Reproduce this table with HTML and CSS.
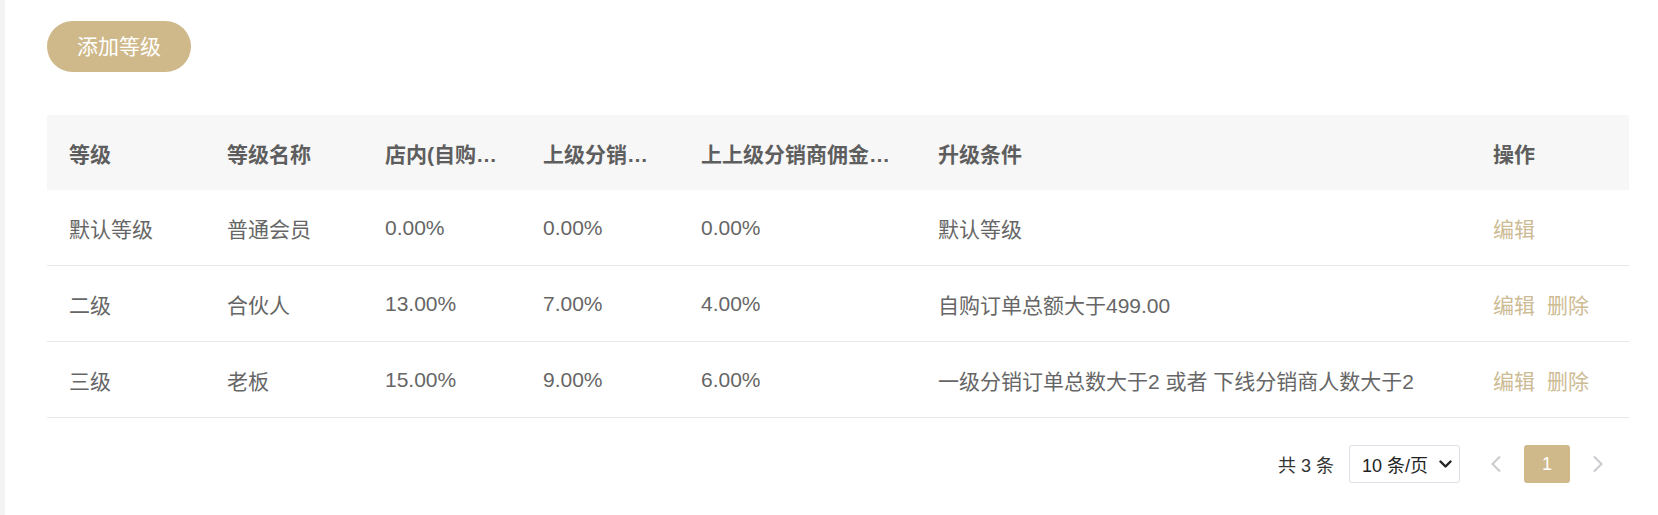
FILE: index.html
```html
<!DOCTYPE html>
<html lang="zh-CN">
<head>
<meta charset="utf-8">
<title>等级管理</title>
<link rel="stylesheet" href="styles.css">
</head>
<body>
<div class="page">
  <div class="toolbar">
    <button class="btn-add" type="button">添加等级</button>
  </div>
  <table class="grid">
    <colgroup>
      <col class="c-level">
      <col class="c-name">
      <col class="c-pct">
      <col class="c-pct">
      <col class="c-wide">
      <col class="c-cond">
      <col class="c-ops">
    </colgroup>
    <thead>
      <tr>
        <th>等级</th>
        <th>等级名称</th>
        <th title="店内(自购)佣金比例">店内(自购…</th>
        <th title="上级分销商佣金比例">上级分销…</th>
        <th title="上上级分销商佣金比例">上上级分销商佣金…</th>
        <th>升级条件</th>
        <th>操作</th>
      </tr>
    </thead>
    <tbody>
      <tr>
        <td>默认等级</td>
        <td>普通会员</td>
        <td>0.00%</td>
        <td>0.00%</td>
        <td>0.00%</td>
        <td>默认等级</td>
        <td><span class="op">编辑</span></td>
      </tr>
      <tr>
        <td>二级</td>
        <td>合伙人</td>
        <td>13.00%</td>
        <td>7.00%</td>
        <td>4.00%</td>
        <td>自购订单总额大于499.00</td>
        <td><span class="op">编辑</span><span class="op op-gap">删除</span></td>
      </tr>
      <tr>
        <td>三级</td>
        <td>老板</td>
        <td>15.00%</td>
        <td>9.00%</td>
        <td>6.00%</td>
        <td>一级分销订单总数大于2 或者 下线分销商人数大于2</td>
        <td><span class="op">编辑</span><span class="op op-gap">删除</span></td>
      </tr>
    </tbody>
  </table>
  <div class="pager">
    <span class="total">共 3 条</span>
    <div class="size-select">
      <span>10 条/页</span>
      <svg class="chev" width="13" height="8" viewBox="0 0 13 8"><path d="M1.5 1.5 L6.5 6.5 L11.5 1.5" fill="none" stroke="#222" stroke-width="2.4" stroke-linecap="round" stroke-linejoin="round"/></svg>
    </div>
    <span class="nav-btn prev">
      <svg width="12" height="18" viewBox="0 0 12 18"><path d="M10 1.5 L2.5 9 L10 16.5" fill="none" stroke="#c8cacf" stroke-width="2"/></svg>
    </span>
    <span class="page-num">1</span>
    <span class="nav-btn next">
      <svg width="12" height="18" viewBox="0 0 12 18"><path d="M2 1.5 L9.5 9 L2 16.5" fill="none" stroke="#c8cacf" stroke-width="2"/></svg>
    </span>
  </div>
</div>
</body>
</html>
```
FILE: styles.css
```css
html, body {
  margin: 0;
  padding: 0;
}
body {
  background: #f3f3f3;
  font-family: "Liberation Sans", "Noto Sans CJK SC", sans-serif;
}
.page {
  margin-left: 5px;
  min-height: 515px;
  background: #ffffff;
  padding: 21px 29px 0 42px;
  box-sizing: border-box;
}
.toolbar {
  height: 51px;
  margin-bottom: 43px;
}
.btn-add {
  height: 51px;
  padding: 0 30px;
  border: none;
  border-radius: 26px;
  background: #cfb98a;
  color: #ffffff;
  font-family: "Liberation Sans", "Noto Sans CJK SC", sans-serif;
  font-size: 21px;
  line-height: 51px;
  cursor: pointer;
}
.grid {
  width: 100%;
  table-layout: fixed;
  border-collapse: separate;
  border-spacing: 0;
  font-size: 21px;
}
.c-level, .c-name, .c-pct, .c-ops { width: 158px; }
.c-wide { width: 237px; }
.c-cond { width: 555px; }
.grid th,
.grid td {
  padding: 0 22px;
  text-align: left;
  white-space: nowrap;
  vertical-align: middle;
}
.grid th {
  height: 75px;
  background: #f7f7f7;
  color: #5e5e5e;
  font-weight: bold;
}
.grid td {
  height: 75px;
  color: #666666;
  border-bottom: 1px solid #e8e8e8;
}
.op {
  color: #cdbb94;
  cursor: pointer;
}
.op-gap {
  margin-left: 12px;
}
.pager {
  margin-top: 27px;
  height: 38px;
  display: flex;
  justify-content: flex-end;
  align-items: center;
  padding-right: 16px;
  font-size: 18px;
  color: #333333;
}
.total {
  margin-right: 15px;
}
.size-select {
  width: 111px;
  height: 38px;
  box-sizing: border-box;
  border: 1px solid #dcdfe6;
  border-radius: 3px;
  padding: 0 7px 0 12px;
  display: flex;
  align-items: center;
  justify-content: space-between;
  color: #222222;
}
.nav-btn {
  width: 30px;
  height: 38px;
  display: flex;
  align-items: center;
  justify-content: center;
}
.prev {
  margin-left: 21px;
}
.page-num {
  width: 46px;
  height: 38px;
  margin: 0 13px;
  border-radius: 3px;
  background: #cfb98a;
  color: #ffffff;
  display: flex;
  align-items: center;
  justify-content: center;
  font-size: 18px;
}
```
